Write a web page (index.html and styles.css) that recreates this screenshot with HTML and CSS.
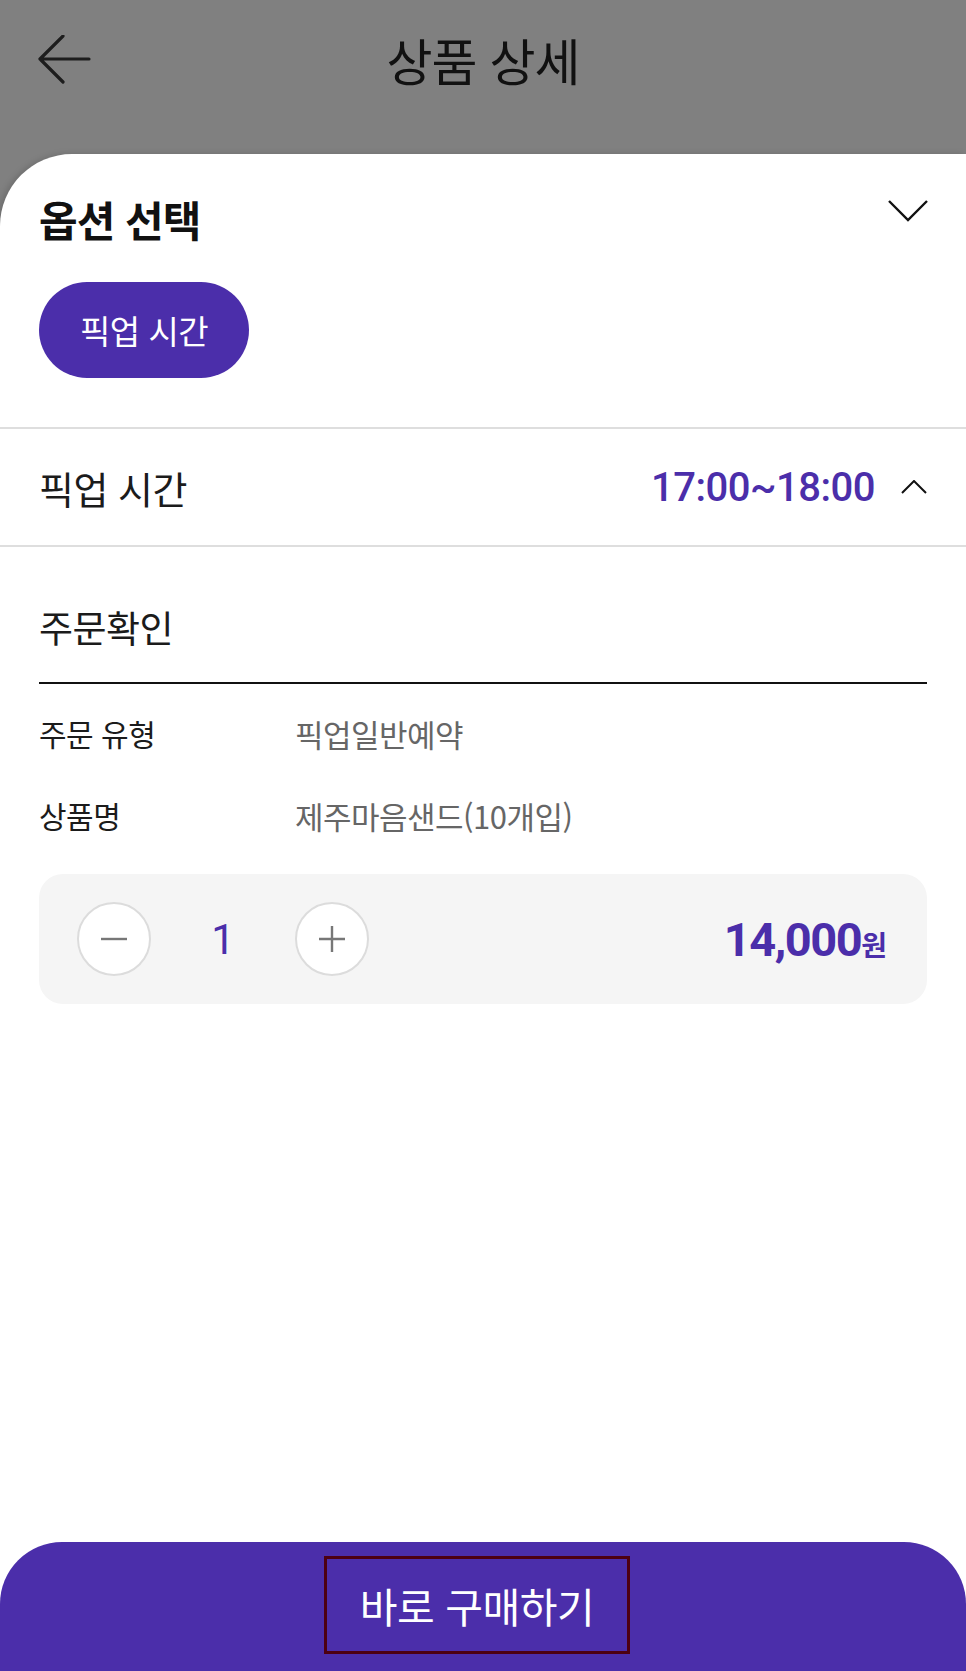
FILE: index.html
```html
<!DOCTYPE html>
<html lang="ko">
<head>
  <meta charset="UTF-8">
  <meta name="viewport" content="width=device-width, initial-scale=1.0">
  <title>상품 상세</title>
  <link rel="stylesheet" href="styles.css">
</head>
<body>
  <div class="page">
    <!-- Top bar (dimmed behind the sheet) -->
    <header class="topbar">
      <div class="topbar-inner">
        <button class="back" aria-label="뒤로">
          <svg width="54" height="50" viewBox="0 0 54 50">
            <path d="M52 24H3M26 1L3 24l23 23" fill="none" stroke="#1d1d1d" stroke-width="3.2" stroke-linecap="round" stroke-linejoin="round"/>
          </svg>
        </button>
        <h1 class="title">상품 상세</h1>
        <span></span>
      </div>
    </header>

    <section class="sheet">
      <div class="opt">
        <div class="opt-head">
          <h2 class="opt-title">옵션 선택</h2>
          <svg class="chev" width="42" height="24" viewBox="0 0 42 24">
            <path d="M2 2l19 19L40 2" fill="none" stroke="#111" stroke-width="2.4"/>
          </svg>
        </div>
        <button class="pill">픽업 시간</button>
      </div>

      <div class="pick-row">
        <span class="pick-label">픽업 시간</span>
        <div class="pick-value">
          <span class="time">17:00~18:00</span>
          <svg width="26" height="14" viewBox="0 0 26 14">
            <path d="M1 13L13 1l12 12" fill="none" stroke="#111" stroke-width="2"/>
          </svg>
        </div>
      </div>

      <div class="order">
        <h3 class="order-title">주문확인</h3>
        <dl class="info">
          <div class="info-row"><dt>주문 유형</dt><dd>픽업일반예약</dd></div>
          <div class="info-row"><dt>상품명</dt><dd>제주마음샌드(10개입)</dd></div>
        </dl>

        <div class="qty-box">
          <div class="qty">
            <button class="circle" aria-label="빼기">
              <svg width="30" height="30" viewBox="0 0 30 30"><path d="M2 15h26" stroke="#777" stroke-width="2.4"/></svg>
            </button>
            <span class="count">1</span>
            <button class="circle" aria-label="더하기">
              <svg width="30" height="30" viewBox="0 0 30 30"><path d="M2 15h26M15 2v26" stroke="#777" stroke-width="2.4"/></svg>
            </button>
          </div>
          <div class="price">14,000<span class="won">원</span></div>
        </div>
      </div>

      <div class="buy">
        <span class="buy-label">바로 구매하기</span>
      </div>
    </section>
  </div>
</body>
</html>
```

FILE: styles.css
```css
:root {
  --purple: #4b2eaa;
  --dim: #808080;
  --line: #dedede;
  --text: #1b1b1b;
  --muted: #666;
}

* { box-sizing: border-box; }

body {
  margin: 0;
  font-family: "Noto Sans CJK KR", "Noto Sans", sans-serif;
  color: var(--text);
  background: #fff;
}

button {
  font: inherit;
  border: 0;
  background: none;
  padding: 0;
  cursor: pointer;
}

.page {
  display: flex;
  flex-direction: column;
  height: 100vh;
  background: var(--dim);
}

/* top bar */
.topbar {
  flex: none;
  height: 154px;
}
.topbar-inner {
  display: grid;
  grid-template-columns: 1fr auto 1fr;
  align-items: center;
  height: 118px;
}
.back {
  justify-self: start;
  margin-left: 37px;
  margin-top: 2px;
  display: flex;
}
.title {
  margin: 0;
  font-size: 50px;
  font-weight: 400;
  letter-spacing: -1px;
  color: #111;
}

/* white sheet */
.sheet {
  flex: 1;
  display: flex;
  flex-direction: column;
  background: #fff;
  border-top-left-radius: 72px;
  box-shadow: -3px 0 6px rgba(0,0,0,0.15);
}

.opt {
  padding: 0 39px 49px;
  border-bottom: 2px solid var(--line);
}
.opt-head {
  display: flex;
  align-items: center;
  justify-content: space-between;
  height: 128px;
}
.opt-title {
  margin: 0;
  font-size: 42px;
  font-weight: 700;
  letter-spacing: -1px;
  color: #111;
}
.chev {
  margin-right: -2px;
  margin-bottom: 14px;
}
.pill {
  height: 96px;
  padding: 0 41px;
  border-radius: 48px;
  background: var(--purple);
  color: #fff;
  font-size: 33px;
  letter-spacing: -0.5px;
}

.pick-row {
  display: flex;
  align-items: center;
  justify-content: space-between;
  height: 118px;
  padding: 0 39px;
  border-bottom: 2px solid var(--line);
}
.pick-label {
  font-size: 38px;
  letter-spacing: -0.5px;
}
.pick-value {
  display: flex;
  align-items: center;
  gap: 26px;
}
.time {
  font-family: Roboto, "Noto Sans CJK KR", sans-serif;
  font-size: 40px;
  font-weight: 500;
  letter-spacing: -0.5px;
  color: var(--purple);
}

/* order confirmation */
.order {
  padding: 0 39px;
}
.order-title {
  margin: 0;
  padding: 52px 0 27px;
  line-height: 56px;
  font-size: 37px;
  font-weight: 400;
  letter-spacing: -0.5px;
  border-bottom: 2px solid #111;
}
.info {
  margin: 0;
  padding-top: 8px;
}
.info-row {
  display: flex;
  align-items: center;
  height: 82px;
  font-size: 30px;
  letter-spacing: -0.5px;
}
.info-row dt {
  width: 256px;
}
.info-row dd {
  margin: 0;
  font-size: 31px;
  color: var(--muted);
}

.qty-box {
  display: flex;
  align-items: center;
  justify-content: space-between;
  height: 130px;
  margin-top: 18px;
  padding: 0 40px 0 38px;
  border-radius: 24px;
  background: #f5f5f5;
}
.qty {
  display: flex;
  align-items: center;
}
.circle {
  display: flex;
  align-items: center;
  justify-content: center;
  width: 74px;
  height: 74px;
  border-radius: 50%;
  border: 2px solid #dcdcdc;
  background: #fff;
}
.count {
  width: 144px;
  text-align: center;
  font-family: Roboto, sans-serif;
  font-size: 42px;
  color: var(--purple);
}
.price {
  font-family: Roboto, "Noto Sans CJK KR", sans-serif;
  font-size: 47px;
  font-weight: 700;
  letter-spacing: -1.5px;
  color: var(--purple);
}
.won {
  font-family: "Noto Sans CJK KR", sans-serif;
  font-size: 28px;
  letter-spacing: 0;
}

/* bottom buy button */
.buy {
  margin-top: auto;
  height: 129px;
  display: flex;
  align-items: center;
  justify-content: center;
  background: var(--purple);
  border-radius: 62px 62px 0 0;
}
.buy-label {
  margin-right: 12px;
  margin-bottom: 4px;
  padding: 16px 33px;
  border: 3px solid #4d0012;
  color: #fff;
  font-size: 41px;
  letter-spacing: -0.5px;
}
```
